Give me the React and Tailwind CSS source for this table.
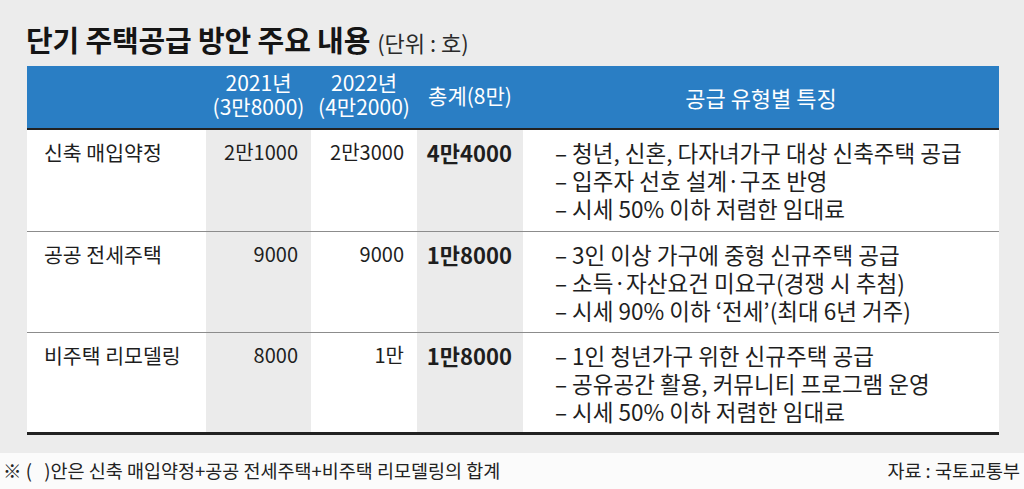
import React from "react";

const rows = [
  {
    name: "신축 매입약정",
    a: "2만1000",
    b: "2만3000",
    t: "4만4000",
    desc: ["– 청년, 신혼, 다자녀가구 대상 신축주택 공급", "– 입주자 선호 설계·구조 반영", "– 시세 50% 이하 저렴한 임대료"],
  },
  {
    name: "공공 전세주택",
    a: "9000",
    b: "9000",
    t: "1만8000",
    desc: ["– 3인 이상 가구에 중형 신규주택 공급", "– 소득·자산요건 미요구(경쟁 시 추첨)", "– 시세 90% 이하 ‘전세’(최대 6년 거주)"],
  },
  {
    name: "비주택 리모델링",
    a: "8000",
    b: "1만",
    t: "1만8000",
    desc: ["– 1인 청년가구 위한 신규주택 공급", "– 공유공간 활용, 커뮤니티 프로그램 운영", "– 시세 50% 이하 저렴한 임대료"],
  },
];

const font = { fontFamily: '"Noto Sans CJK KR", "Noto Sans", sans-serif' };

export default function App() {
  return (
    <div className="w-[1024px] h-[489px] bg-[#ececec] flex flex-col text-[#1e1e1e] overflow-hidden" style={font}>
      <div className="h-[66px] pl-[26px] pt-[21px] flex items-baseline gap-[7px]">
        <span className="text-[29px] font-bold leading-[36px] tracking-[-0.005em] text-[#151515]">단기 주택공급 방안 주요 내용</span>
        <span className="text-[22px] leading-[36px] text-[#2a2a2a]">(단위 : 호)</span>
      </div>
      <div className="ml-[27px] w-[972px] grid grid-cols-[179px_105px_106px_106px_1fr]">
        <div className="h-[62px] bg-[#2a7ec4]" />
        <div className="h-[62px] bg-[#2a7ec4] flex items-center justify-center pb-[6px] text-center text-white text-[21px] leading-[24px]">
          <span>2021년<br />(3만8000)</span>
        </div>
        <div className="h-[62px] bg-[#2a7ec4] flex items-center justify-center pb-[6px] text-center text-white text-[21px] leading-[24px]">
          <span>2022년<br />(4만2000)</span>
        </div>
        <div className="h-[62px] bg-[#2a7ec4] flex items-center justify-center pb-[2px] text-white text-[21px]">총계(8만)</div>
        <div className="h-[62px] bg-[#2a7ec4] flex items-center justify-center text-white text-[22px]">공급 유형별 특징</div>
        <div className="col-span-5 h-[2px] bg-[#222]" />
        {rows.map((r, i) => {
          const last = i === rows.length - 1;
          const h = i === 1 ? "h-[101px]" : "h-[102px]";
          const b = last ? "border-b-[3px] border-[#222]" : "border-b border-[#8c8c8c]";
          return (
            <React.Fragment key={i}>
              <div className={`${h} ${b} bg-white pl-[17px] pt-[8px] text-[20.5px] leading-[28px]`}>{r.name}</div>
              <div className={`${h} ${b} bg-[#ebebeb] pr-[13px] pt-[8px] text-right text-[20px] leading-[28px]`}>{r.a}</div>
              <div className={`${h} ${b} bg-white pr-[13px] pt-[8px] text-right text-[20px] leading-[28px]`}>{r.b}</div>
              <div className={`${h} ${b} bg-[#ebebeb] pr-[11px] pt-[8px] text-right text-[22px] leading-[28px] font-semibold`}>{r.t}</div>
              <div className={`${h} ${b} bg-white pl-[32px] pt-[8px] text-[22.5px] leading-[28px] flex flex-col`}>
                {r.desc.map((d, j) => (
                  <span key={j} className="whitespace-nowrap">{d}</span>
                ))}
              </div>
            </React.Fragment>
          );
        })}
      </div>
      <div className="h-[18px]" />
      <div className="flex-1 bg-[#fbfbfb] flex items-center justify-between pl-[3px] pr-[4px] text-[18.5px] text-[#222]">
        <span>※ (&nbsp;&nbsp;&nbsp;)안은 신축 매입약정+공공 전세주택+비주택 리모델링의 합계</span>
        <span>자료 : 국토교통부</span>
      </div>
    </div>
  );
}
